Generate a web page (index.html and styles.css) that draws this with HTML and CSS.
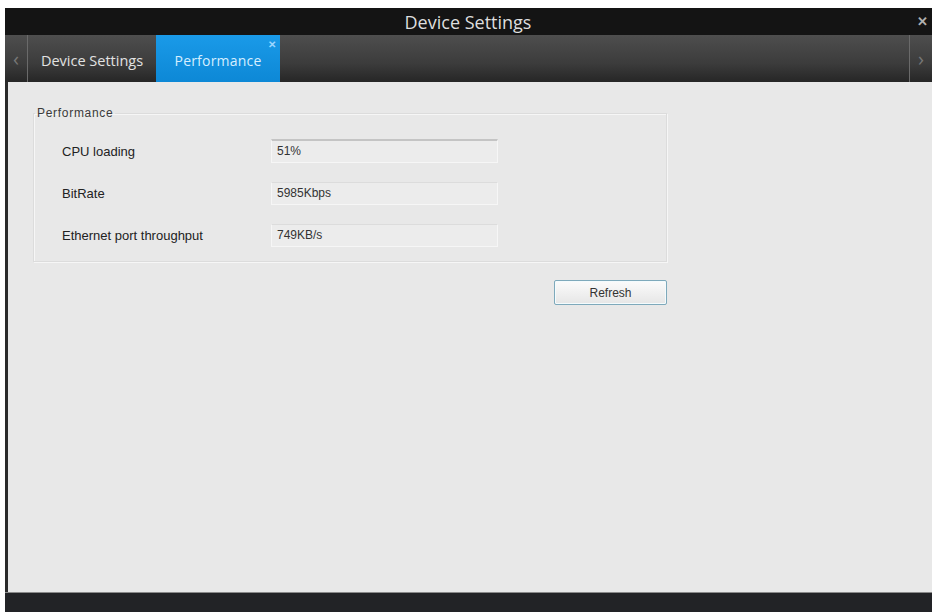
FILE: index.html
```html
<!DOCTYPE html>
<html lang="en">
  <head>
    <meta charset="UTF-8" />
    <title>Device Settings</title>
    <link rel="stylesheet" href="styles.css">
  </head>
  <body>
    <div class="window">
      <!-- Title bar -->
      <div class="title-bar">
        <span class="title">Device Settings</span>
        <span class="close">&#x2715;</span>
      </div>

      <!-- Tabs -->
      <div class="tab-bar">
        <div class="tab-arrow left">&#x2039;</div>
        <div class="tab">Device Settings</div>
        <div class="tab active">Performance<span class="tab-close">&#x2715;</span></div>
        <div class="tab-fill"></div>
        <div class="tab-arrow right">&#x203A;</div>
      </div>

      <!-- Content -->
      <div class="content">
        <fieldset class="group">
          <legend>Performance</legend>
          <div class="row">
            <span class="label">CPU loading</span>
            <div class="value focused">51%</div>
          </div>
          <div class="row">
            <span class="label">BitRate</span>
            <div class="value">5985Kbps</div>
          </div>
          <div class="row">
            <span class="label">Ethernet port throughput</span>
            <div class="value">749KB/s</div>
          </div>
        </fieldset>
        <div class="actions">
          <button class="btn">Refresh</button>
        </div>
      </div>

      <div class="status-bar"></div>
    </div>
  </body>
</html>
```

FILE: styles.css
```css
/* Global */
body {
  margin: 0;
  padding: 0;
  background-color: #ffffff;
  font-family: "Liberation Sans", Arial, sans-serif;
}

.window {
  display: flex;
  flex-direction: column;
  margin: 8px 0 0 5px;
  height: 604px;
}

/* Title bar */
.title-bar {
  position: relative;
  height: 27px;
  background-color: #141414;
  display: flex;
  align-items: center;
  justify-content: center;
}

.title {
  font-family: "Open Sans", sans-serif;
  font-size: 18px;
  color: #dedede;
  margin-left: -1px;
}

.close {
  position: absolute;
  right: 4px;
  top: 6px;
  font-size: 13px;
  font-weight: bold;
  color: #b0b0b0;
}

/* Tab bar */
.tab-bar {
  height: 47px;
  display: flex;
  background: linear-gradient(#4e4e4e, #3c3c3c 60%, #262626);
  font-family: "Open Sans", sans-serif;
}

.tab-arrow {
  width: 22px;
  display: flex;
  align-items: center;
  justify-content: center;
  color: #777777;
  font-size: 20px;
}

.tab-arrow.left {
  border-right: 1px solid #6a6a6a;
}

.tab-arrow.right {
  border-left: 1px solid #6a6a6a;
}

.tab {
  width: 128px;
  display: flex;
  align-items: center;
  justify-content: center;
  padding-top: 4px;
  font-size: 14.5px;
  color: #e2e2e2;
}

.tab.active {
  position: relative;
  width: 124px;
  background: linear-gradient(#1a9ae8, #0d88d6);
  color: #d6eeff;
  font-size: 14px;
  letter-spacing: 0.2px;
}

.tab-close {
  position: absolute;
  right: 4px;
  top: 2px;
  font-size: 10px;
  font-weight: bold;
  color: #9dd6ff;
}

.tab-fill {
  flex: 1;
}

/* Content */
.content {
  flex: 1;
  background-color: #e8e8e8;
  border-left: 3px solid #2a2a2a;
  padding: 24px 0 0 25px;
}

.group {
  width: 632px;
  margin: 0;
  padding: 10px 0 5px 0;
  border: 1px solid #dcdcdc;
  box-shadow: inset 1px 1px 0 #f6f6f6, 1px 1px 0 #f6f6f6;
}

.group legend {
  margin-left: 1px;
  padding: 0 2px;
  font-size: 12px;
  letter-spacing: 0.7px;
  color: #3a3a3a;
}

.row {
  display: flex;
  align-items: center;
  height: 42px;
  padding-left: 28px;
}

.label {
  width: 209px;
  font-size: 13px;
  color: #222222;
}

.value {
  width: 220px;
  height: 21px;
  line-height: 21px;
  padding-left: 5px;
  background-color: #ececec;
  border: 1px solid #f6f6f6;
  border-top-color: #dcdcdc;
  font-size: 12px;
  color: #333333;
}

.value.focused {
  border-top: 2px solid #c4c4c4;
}

.actions {
  width: 634px;
  display: flex;
  justify-content: flex-end;
  margin-top: 18px;
}

.btn {
  width: 113px;
  height: 25px;
  font-family: "Liberation Sans", Arial, sans-serif;
  font-size: 12px;
  color: #333333;
  background: linear-gradient(#fbfbfb, #e6e6e6);
  border: 1px solid #7ea9bb;
  border-radius: 2px;
  box-shadow: inset 0 0 0 1px #f4fbfd;
}

/* Status bar */
.status-bar {
  height: 19px;
  background-color: #222326;
  border-top: 1px solid #8a8a8a;
}
```
